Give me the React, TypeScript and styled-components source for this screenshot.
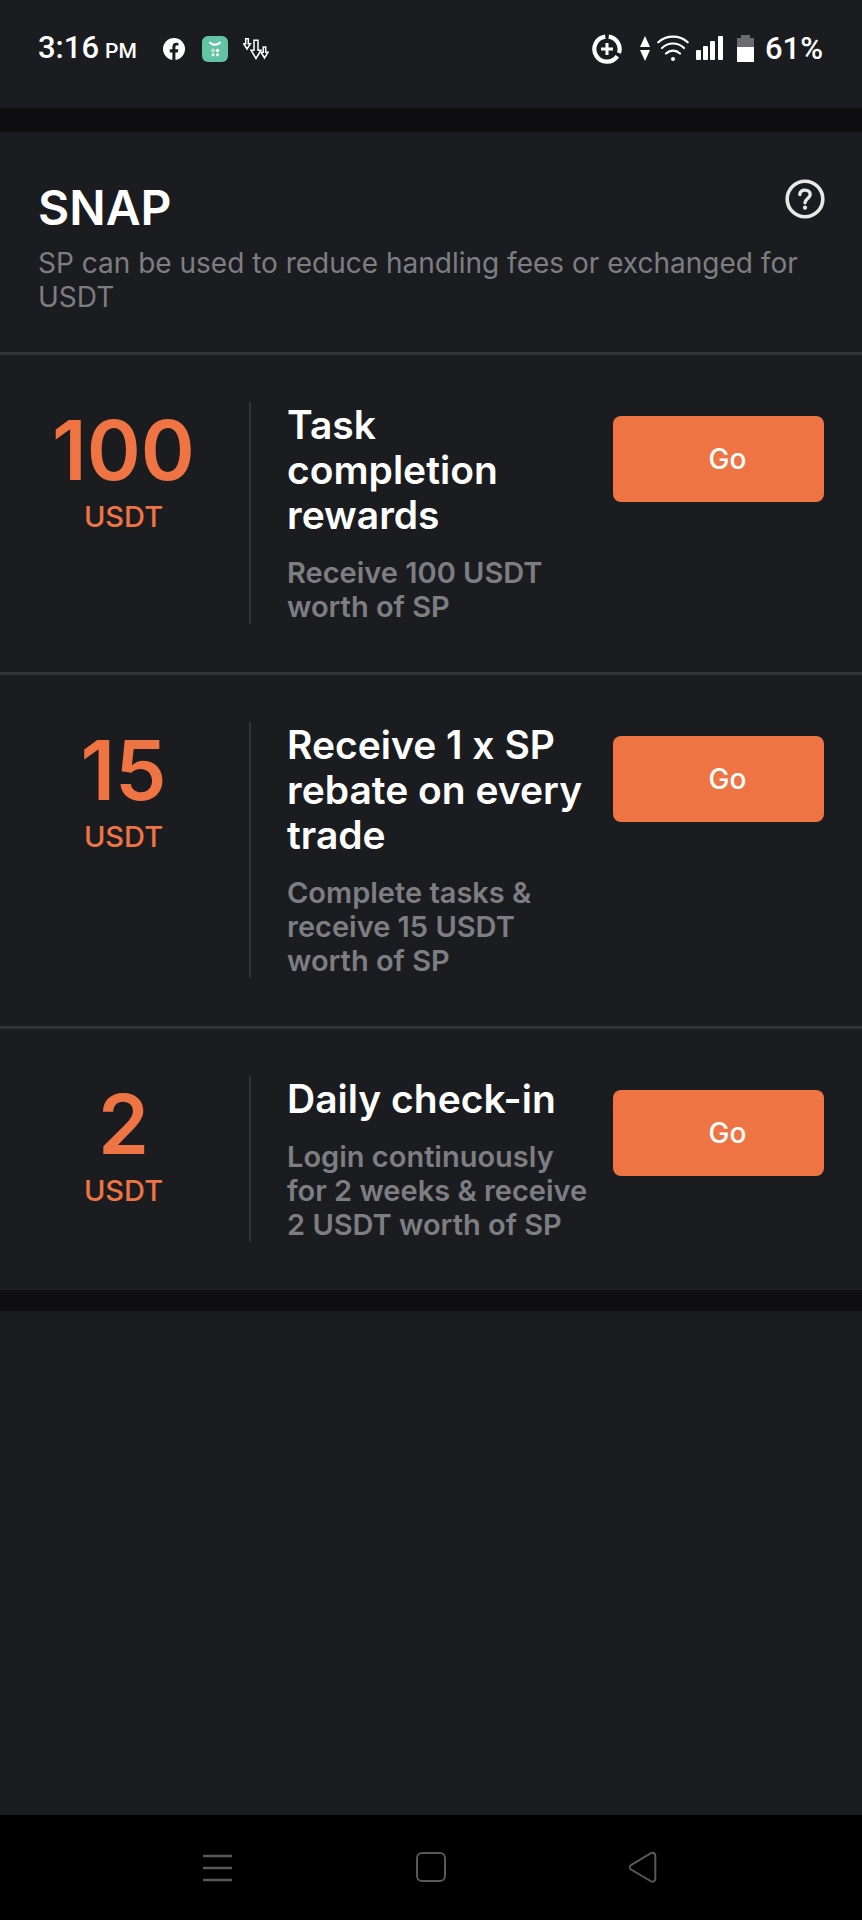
import React from "react";
import styled, { createGlobalStyle } from "styled-components";

const colors = {
  surface: "#1b1c20",
  band: "#0f0f11",
  line: "#313236",
  muted: "#7d7e82",
  accent: "#ef7443",
  nav: "#585858",
};

const GlobalStyle = createGlobalStyle`
  *, *::before, *::after { box-sizing: border-box; }
  body {
    margin: 0;
    background: ${colors.surface};
    color: #fff;
    font-family: Inter, "Liberation Sans", sans-serif;
  }
  h1, h2, p, ul { margin: 0; padding: 0; }
  button { border: 0; padding: 0; background: none; color: inherit; font: inherit; cursor: pointer; }
`;

const Screen = styled.div`
  display: flex;
  flex-direction: column;
  min-height: 100vh;
  background: ${colors.surface};
`;

const StatusBar = styled.header`
  display: flex;
  justify-content: space-between;
  align-items: center;
  height: 108px;
  padding: 0 39px 10px 38px;
  font-family: Roboto, sans-serif;
  font-size: 31px;
  font-weight: 500;
  line-height: 36px;
`;

const StatusGroup = styled.div`
  display: flex;
  align-items: center;
`;

const Clock = styled.time`
  margin-right: 26px;
`;

const Meridiem = styled.span`
  margin-left: 6px;
  font-size: 21px;
`;

const StatusIcon = styled.svg<{ $gap: number }>`
  display: block;
  flex: none;
  margin-right: ${({ $gap }) => $gap}px;
`;

const Band = styled.div<{ $height: number }>`
  height: ${({ $height }) => $height}px;
  background: ${colors.band};
`;

const Intro = styled.section`
  display: grid;
  grid-template-columns: 1fr auto;
  padding: 47px 37px 38px 38px;
`;

const Title = styled.h1`
  font-size: 48px;
  font-weight: 600;
  line-height: 58px;
`;

const HelpButton = styled.button`
  width: 40px;
  height: 40px;
`;

const Subtitle = styled.p`
  grid-column: 1 / -1;
  margin-top: 9px;
  color: ${colors.muted};
  font-size: 28px;
  line-height: 34px;
`;

const RewardList = styled.ul`
  list-style: none;
`;

const RewardRow = styled.li`
  display: grid;
  grid-template-columns: 249px 1fr 211px;
  padding: 47px 38px 48px 0;
  border-top: 3px solid ${colors.line};
`;

const Amount = styled.div`
  display: flex;
  flex-direction: column;
  align-items: center;
  padding-right: 2px;
  color: ${colors.accent};
`;

const AmountValue = styled.strong`
  font-size: 82px;
  font-weight: 600;
  line-height: 98px;
`;

const AmountUnit = styled.span`
  font-size: 29px;
  font-weight: 500;
  line-height: 34px;
`;

const Details = styled.div`
  padding: 0 20px 0 36px;
  border-left: 2px solid ${colors.line};
`;

const RewardName = styled.h2`
  font-size: 39px;
  font-weight: 600;
  line-height: 45px;
`;

const RewardText = styled.p`
  margin-top: 19px;
  color: ${colors.muted};
  font-size: 29px;
  font-weight: 600;
  line-height: 34px;
`;

const GoButton = styled.button`
  height: 86px;
  margin-top: 14px;
  padding-left: 18px;
  border-radius: 8px;
  background: ${colors.accent};
  font-size: 28px;
  font-weight: 500;
`;

const NavBar = styled.nav`
  display: flex;
  height: 105px;
  margin-top: auto;
  padding: 0 13% 2px;
  background: #000;
`;

const NavButton = styled.button`
  display: flex;
  flex: 1;
  align-items: center;
  justify-content: center;
`;

const rewards = [
  { amount: "100", name: "Task completion rewards", text: "Receive 100 USDT worth of SP" },
  { amount: "15", name: "Receive 1 x SP rebate on every trade", text: "Complete tasks & receive 15 USDT worth of SP" },
  { amount: "2", name: "Daily check-in", text: "Login continuously for 2 weeks & receive 2 USDT worth of SP" },
];

const FacebookIcon = () => (
  <StatusIcon $gap={17} width="22" height="22" viewBox="0 0 22 22" aria-hidden="true">
    <circle cx="11" cy="11" r="11" fill="#fff" />
    <path d="M9.4 22v-7.6H6.8v-3.2h2.6V8.9c0-2.7 1.5-4.2 4-4.2 1 0 2 .2 2 .2v2.6H14c-1.200 0-1.600.7-1.600 1.500v2.200h2.900l-.5 3.200h-2.400V22z" fill={colors.surface} />
  </StatusIcon>
);

const FaceAppIcon = () => (
  <StatusIcon $gap={15} width="26" height="26" viewBox="0 0 26 26" aria-hidden="true">
    <rect width="26" height="26" rx="6" fill="#62c4a3" />
    <path d="M7.500 6c2 3.500 9 3.500 11 0" fill="none" stroke="#fff" strokeWidth="2" />
    <circle cx="11" cy="14.500" r="1.300" fill="none" stroke="#fff" />
    <circle cx="15.500" cy="14.500" r="1.800" fill="#fff" />
    <circle cx="11" cy="18.800" r="1.600" fill="#e3f5ef" />
    <circle cx="15.500" cy="18.800" r="1.600" fill="#e3f5ef" />
  </StatusIcon>
);

const DownArrowsIcon = () => (
  <StatusIcon $gap={0} width="26" height="22" viewBox="0 0 26 22" fill="none" stroke="#fff" strokeWidth="1.500" aria-hidden="true">
    <path d="M2.700.8h2.600v5h2L4 11 .8 5.800h1.900z" />
    <path d="M11 2.200h4v10h3L13 20.500 8 12.200h3z" />
    <path d="M20.300 9h2.400v5.200h2.300L21.500 20 18 14.200h2.300z" />
  </StatusIcon>
);

const DataSaverIcon = () => (
  <StatusIcon $gap={18} width="30" height="30" viewBox="0 0 30 30" fill="none" stroke="#fff" aria-hidden="true">
    <path d="M13.300 2.600A12.600 12.600 0 1 0 25.300 22.300" strokeWidth="4.200" />
    <path d="M16.700 2.600A12.600 12.600 0 0 1 27 19" strokeWidth="4.200" />
    <path d="M15 9v12M9 15h12" strokeWidth="3" />
  </StatusIcon>
);

const TransferIcon = () => (
  <StatusIcon $gap={7} width="10" height="26" viewBox="0 0 10 26" fill="#fff" aria-hidden="true">
    <path d="M5 0l5 11H0zM5 25L0 14h10z" />
  </StatusIcon>
);

const WifiIcon = () => (
  <StatusIcon $gap={7} width="32" height="28" viewBox="0 0 32 28" fill="none" stroke="#fff" strokeWidth="2.200" strokeLinecap="round" aria-hidden="true">
    <path d="M1.300 7.300C9.500-.3 22.500-.3 30.700 7.300" />
    <path d="M5 13c6.200-6 15.800-6 22 0" />
    <path d="M9 18.500c4-3.800 10-3.800 14 0" />
    <circle cx="16" cy="24" r="2" fill="#fff" stroke="none" />
  </StatusIcon>
);

const SignalIcon = () => (
  <StatusIcon $gap={14} width="27" height="26" viewBox="0 0 27 26" fill="#fff" aria-hidden="true">
    <rect x="0" y="14" width="5" height="10" rx="1" />
    <rect x="7" y="10" width="5" height="14" rx="1" />
    <rect x="14" y="5" width="5" height="19" rx="1" />
    <rect x="22" y="0" width="5" height="24" rx="1" />
  </StatusIcon>
);

const BatteryIcon = () => (
  <StatusIcon $gap={11} width="17" height="29" viewBox="0 0 17 29" aria-hidden="true">
    <path d="M4 0h9v3h4v24H0V3h4z" fill="#6b6b6e" />
    <path d="M0 12h17v15H0z" fill="#fff" />
  </StatusIcon>
);

export default function App() {
  return (
    <Screen>
      <GlobalStyle />
      <StatusBar>
        <StatusGroup>
          <Clock>
            3:16<Meridiem>PM</Meridiem>
          </Clock>
          <FacebookIcon />
          <FaceAppIcon />
          <DownArrowsIcon />
        </StatusGroup>
        <StatusGroup>
          <DataSaverIcon />
          <TransferIcon />
          <WifiIcon />
          <SignalIcon />
          <BatteryIcon />
          <span>61%</span>
        </StatusGroup>
      </StatusBar>
      <Band $height={24} />
      <main>
        <Intro>
          <Title>SNAP</Title>
          <HelpButton type="button" aria-label="Help">
            <svg width="40" height="40" viewBox="0 0 40 40" fill="none" stroke="#e8e8e8" strokeLinecap="round" aria-hidden="true">
              <circle cx="20" cy="20" r="17.800" strokeWidth="3.600" />
              <path d="M14.800 15.500c.3-3 2.300-4.400 5.200-4.400 3.100 0 5.200 1.700 5.200 4.400 0 3.700-5.200 4.300-5.200 8.300" strokeWidth="3.400" />
              <circle cx="20" cy="28.700" r="2.100" fill="#e8e8e8" stroke="none" />
            </svg>
          </HelpButton>
          <Subtitle>SP can be used to reduce handling fees or exchanged for USDT</Subtitle>
        </Intro>
        <RewardList>
          {rewards.map((reward) => (
            <RewardRow key={reward.name}>
              <Amount>
                <AmountValue>{reward.amount}</AmountValue>
                <AmountUnit>USDT</AmountUnit>
              </Amount>
              <Details>
                <RewardName>{reward.name}</RewardName>
                <RewardText>{reward.text}</RewardText>
              </Details>
              <GoButton type="button">Go</GoButton>
            </RewardRow>
          ))}
        </RewardList>
      </main>
      <Band $height={21} />
      <NavBar>
        <NavButton type="button" aria-label="Recent apps">
          <svg width="30" height="30" viewBox="0 0 30 30" stroke={colors.nav} strokeWidth="2.400" aria-hidden="true">
            <path d="M0 4h29M0 16h29M0 28h29" />
          </svg>
        </NavButton>
        <NavButton type="button" aria-label="Home">
          <svg width="30" height="30" viewBox="0 0 30 30" fill="none" stroke={colors.nav} strokeWidth="2" aria-hidden="true">
            <rect x="1" y="1" width="28" height="28" rx="5" />
          </svg>
        </NavButton>
        <NavButton type="button" aria-label="Back">
          <svg width="30" height="32" viewBox="0 0 30 32" fill="none" stroke={colors.nav} strokeWidth="2" aria-hidden="true">
            <path d="M2 14.200 21.500 2.300C24 .9 26.300 2 26.300 5V27.500C26.300 30.500 24 31.500 21.500 30L2 18.500Q-1 16.300 2 14.200Z" />
          </svg>
        </NavButton>
      </NavBar>
    </Screen>
  );
}
